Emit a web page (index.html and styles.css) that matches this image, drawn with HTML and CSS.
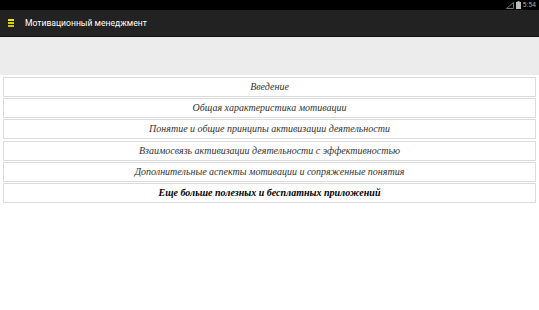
FILE: index.html
```html
<!DOCTYPE html>
<html lang="ru">

<head>
    <meta charset="UTF-8">
    <meta name="viewport" content="width=device-width, initial-scale=1.0">
    <title>Мотивационный менеджмент</title>
    <link rel="stylesheet" href="styles.css">
</head>

<body>
    <div class="status-bar">
        <svg class="signal" width="8" height="7" viewBox="0 0 8 7">
            <path d="M7.5 0.5 L7.5 6.5 L0.5 6.5 Z" fill="none" stroke="#777" stroke-width="1"/>
        </svg>
        <svg class="battery" width="5" height="8" viewBox="0 0 5 8">
            <rect x="1.5" y="0" width="2" height="1" fill="#aaa"/>
            <rect x="0" y="1" width="5" height="7" fill="#bbb"/>
        </svg>
        <span class="clock">5:54</span>
    </div>

    <div class="app-bar">
        <svg class="app-icon" width="6" height="8" viewBox="0 0 6 8">
            <rect x="0" y="0" width="6" height="2" fill="#e8e800"/>
            <rect x="0" y="3" width="6" height="2" fill="#d4d400"/>
            <rect x="0" y="6" width="6" height="2" fill="#c8c800"/>
        </svg>
        <span class="app-title">Мотивационный менеджмент</span>
    </div>

    <div class="banner"></div>

    <ul class="menu">
        <li>Введение</li>
        <li>Общая характеристика мотивации</li>
        <li>Понятие и общие принципы активизации деятельности</li>
        <li>Взаимосвязь активизации деятельности с эффективностью</li>
        <li>Дополнительные аспекты мотивации и сопряженные понятия</li>
        <li class="more">Еще больше полезных и бесплатных приложений</li>
    </ul>
</body>

</html>
```

FILE: styles.css
```css
body {
    margin: 0;
    padding: 0;
    background-color: #fff;
    font-family: Roboto, "Noto Sans", sans-serif;
}

.status-bar {
    height: 10px;
    background-color: #000;
    display: flex;
    align-items: center;
    justify-content: flex-end;
    gap: 2px;
    padding-right: 3px;
}

.status-bar .clock {
    color: #aaa;
    font-size: 7px;
    line-height: 10px;
}

.app-bar {
    height: 26px;
    background-color: #222;
    display: flex;
    align-items: center;
    border-bottom: 1px solid #111;
    box-shadow: 0 1px 1px rgba(0, 0, 0, 0.2);
}

.app-icon {
    margin-left: 8px;
    margin-right: 11px;
}

.app-title {
    color: #fff;
    font-size: 8.6px;
}

.banner {
    height: 38px;
    background-color: #ececec;
}

.menu {
    list-style: none;
    margin: 2px 3px 0 3px;
    padding: 0;
}

.menu li {
    height: 18px;
    line-height: 18px;
    margin-bottom: 1.2px;
    border: 1px solid #dcdcdc;
    text-align: center;
    font-family: "Liberation Serif", serif;
    font-style: italic;
    font-size: 10px;
    color: #333;
}

.menu li.more {
    font-weight: bold;
    color: #000;
}
```
